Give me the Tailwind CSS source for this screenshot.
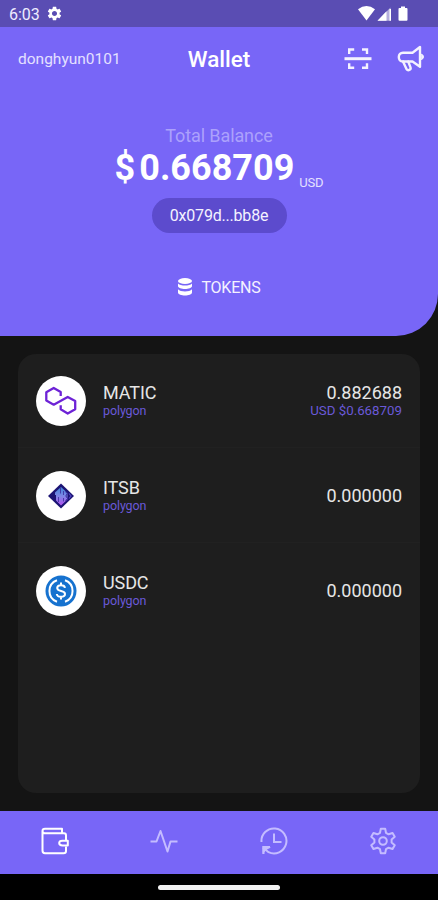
<!DOCTYPE html>
<html lang="en">
<head>
  <meta charset="UTF-8" />
  <meta name="viewport" content="width=device-width, initial-scale=1.0" />
  <title>Wallet</title>
  <script src="https://cdn.jsdelivr.net/npm/@tailwindcss/browser@4"></script>
</head>
<body class="h-[900px] w-[438px] overflow-hidden flex flex-col bg-[#141414] text-white font-[Roboto,sans-serif] whitespace-nowrap">
  <!-- Status bar -->
  <div class="h-[27px] shrink-0 bg-[#5a4db3] flex items-center pl-[9px] pr-[30px]">
    <span class="text-[16px] leading-none text-[#eeecff] pt-[2px] w-[37px]">6:03</span>
    <svg class="w-[17px] h-[17px]" viewBox="0 0 24 24" fill="#fff"><path d="M19.14 12.94c.04-.3.06-.61.06-.94 0-.32-.02-.64-.07-.94l2.03-1.58c.18-.14.23-.41.12-.61l-1.92-3.32c-.12-.22-.37-.29-.59-.22l-2.39.96c-.5-.38-1.03-.7-1.62-.94l-.36-2.54c-.04-.24-.24-.41-.48-.41h-3.84c-.24 0-.43.17-.47.41l-.36 2.54c-.59.24-1.13.57-1.62.94l-2.39-.96c-.22-.08-.47 0-.59.22L2.74 8.87c-.12.21-.08.47.12.61l2.03 1.58c-.05.3-.09.63-.09.94s.02.64.07.94l-2.03 1.58c-.18.14-.23.41-.12.61l1.92 3.32c.12.22.37.29.59.22l2.39-.96c.5.38 1.03.7 1.62.94l.36 2.54c.05.24.24.41.48.41h3.84c.24 0 .44-.17.47-.41l.36-2.54c.59-.24 1.13-.56 1.62-.94l2.39.96c.22.08.47 0 .59-.22l1.92-3.32c.12-.22.07-.47-.12-.61l-2.01-1.58zM12 15.6c-1.98 0-3.6-1.62-3.6-3.6s1.62-3.6 3.6-3.6 3.6 1.62 3.6 3.6-1.62 3.6-3.6 3.6z" /></svg>
    <svg class="ml-auto w-[50px] h-[17px]" viewBox="0 0 50 17" fill="#fff">
      <path d="M0 4.200Q8.500-2 17 4.200L8.500 15.500Z" />
      <path d="M19.500 15.700L32.500 2.500V15.700Z" fill-opacity=".55" />
      <path d="M19.500 15.700L28.500 6.300V15.700Z" />
      <path d="M31.500 4h1.500v11.700H31.500Z" />
      <path d="M43 1.500h4V3h1.600q.900 0 .900.900v10.900q0 .900-.900.900h-7.200q-.900 0-.900-.900V3.900q0-.900.900-.900H43Z" />
    </svg>
  </div>

  <!-- Balance -->
  <header class="h-[309px] shrink-0 bg-[#7866f7] rounded-br-[42px] flex flex-col">
    <div class="h-[65px] grid grid-cols-3 items-center pl-[18px] pr-[13px]">
      <span class="text-[15.500px] text-[#e4e0ff]">donghyun0101</span>
      <h1 class="text-[22.500px] font-medium text-center pr-[5px]">Wallet</h1>
      <div class="flex justify-end gap-[25px] pb-[1px]">
        <svg class="w-[28px] h-[28px]" viewBox="0 0 28 28" fill="none" stroke="#f4f2ff" stroke-width="2.400">
          <path d="M.500 13.700h27" stroke-width="3" />
          <path d="M5.200 9V4.500h5M18 4.500h5V9M5.200 18.300v4.500h5M18 22.800h5v-4.500" />
        </svg>
        <svg class="w-[28px] h-[28px]" viewBox="0 0 28 28" fill="none" stroke="#f4f2ff" stroke-width="2.400" stroke-linejoin="round" stroke-linecap="round">
          <path d="M23 2v19.700l-7.500-5.200H6C3 16.500 1.800 14.500 1.800 12S3.500 7.700 6 7.700h9.500Z" />
          <path d="M6 16.500l3.600 7.700c1.500 2 4.700.500 3.900-1.800L11.200 16.500" />
          <path d="M24.200 9.200c3.200.300 3.200 5 0 5.300Z" fill="#f4f2ff" stroke-width="1" />
        </svg>
      </div>
    </div>
    <div class="flex flex-col items-center">
      <p class="mt-[32px] h-[24px] text-[18px] leading-[24px] tracking-[-.1px] text-[#aca1fc]">Total Balance</p>
      <div class="h-[40px] flex items-center">
        <span class="text-[36px] leading-none font-bold">$</span>
        <span class="ml-[4px] text-[36px] leading-none font-bold">0.668709</span>
        <span class="ml-[5px] mt-[28px] text-[13px] leading-none text-[#e4e0ff] tracking-[-.2px]">USD</span>
      </div>
      <div class="mt-[10px] h-[35px] w-[135px] rounded-full bg-[#5c4bcd] flex items-center justify-center text-[16px] tracking-[-.2px] text-[#f4f2ff]">0x079d...bb8e</div>
      <div class="mt-[42px] h-[24px] flex items-center">
        <svg class="w-[16px] h-[20px]" viewBox="0 0 16 20" fill="#fff">
          <ellipse cx="8" cy="4" rx="7" ry="3" />
          <path d="M1 6.500c2.500 2.800 11.500 2.800 14 0v2.500c0 4-14 4-14 0Z" />
          <path d="M1 12.300c2.500 2.900 11.500 2.900 14 0V15.500c0 4-14 4-14 0Z" />
        </svg>
        <span class="ml-[8px] pt-[2px] text-[16px] tracking-[-.2px] text-[#f4f2ff]">TOKENS</span>
      </div>
    </div>
  </header>

  <!-- Token list -->
  <main class="mt-[18px] mx-[18px] h-[439px] shrink-0 rounded-[18px] bg-[#1e1e1e]">
    <div class="h-[94px] border-b border-[#212121] flex items-center px-[18px]">
      <svg class="w-[50px] h-[50px]" viewBox="0 0 50 50" fill="none">
        <circle cx="25" cy="25" r="25" fill="#fff" />
        <path d="M24.700 20V16L17.700 11.900L10.300 16.200V24.600L17.700 28.700L31.700 20.900L39.200 25.100V33.300L31.700 37.500L24.700 33.300V29.200" stroke="#6d22d6" stroke-width="2.300" stroke-linejoin="round" />
      </svg>
      <div class="ml-[17px]">
        <p class="text-[18px] leading-[20px] tracking-[-.1px] text-[#e6e6e6]">MATIC</p>
        <p class="text-[12.500px] leading-[15px] tracking-[-.1px] text-[#6a59d8]">polygon</p>
      </div>
      <div class="ml-auto text-right">
        <p class="text-[18px] leading-[20px] text-[#e6e6e6]">0.882688</p>
        <p class="text-[13.300px] leading-[15px] text-[#6a59d8]">USD $0.668709</p>
      </div>
    </div>
    <div class="h-[95px] border-b border-[#212121] flex items-center px-[18px] pt-px">
      <svg class="w-[50px] h-[50px]" viewBox="0 0 50 50">
        <defs>
          <linearGradient id="itsb" x1="0" y1="0" x2="0" y2="1">
            <stop offset="0" stop-color="#3f86d8" />
            <stop offset=".5" stop-color="#7f86e6" />
            <stop offset="1" stop-color="#b050ee" />
          </linearGradient>
        </defs>
        <circle cx="25" cy="25" r="25" fill="#fff" />
        <path d="M25 12.500L38 25L25 37.500L12 25Z" fill="#1c1474" />
        <path d="M19 21.500L25 16L31.500 22V28.500L25 34.500L20 29.500V24H19Z" fill="url(#itsb)" />
        <path d="M24.500 16.500v6M22.500 26v5M27.500 20v4M27.500 27v3.500" stroke="#3a2c9c" stroke-width=".8" />
        <path d="M29.500 20.500l1.800 2.200-1.500 2.300 1.800 2.500-2 2.500" stroke="#32209a" stroke-width="1" fill="none" />
        <path d="M33 22.500l2 2.500-2 2.500" stroke="#5348c8" stroke-width="1.200" fill="none" />
      </svg>
      <div class="ml-[17px]">
        <p class="text-[18px] leading-[20px] tracking-[-.1px] text-[#e6e6e6]">ITSB</p>
        <p class="text-[12.500px] leading-[15px] tracking-[-.1px] text-[#6a59d8]">polygon</p>
      </div>
      <p class="ml-auto text-[18px] leading-[20px] text-[#e6e6e6]">0.000000</p>
    </div>
    <div class="h-[95px] flex items-center px-[18px]">
      <svg class="w-[50px] h-[50px]" viewBox="0 0 50 50" fill="none" stroke="#fff" stroke-width="2">
        <circle cx="25" cy="25" r="25" fill="#fff" stroke="none" />
        <circle cx="25" cy="25" r="15.500" fill="#1672cf" stroke="none" />
        <path d="M21 14.200a11.500 11.500 0 0 0 0 21.600M29 14.200a11.500 11.500 0 0 1 0 21.600" />
        <path d="M29 21.800c-.3-2-2-2.600-4-2.600s-3.800.8-3.800 2.800c0 4.300 7.800 1.700 7.800 6 0 2-1.800 2.800-4 2.800s-4-.8-4.200-2.800M25 16.500v3M25 30.500v3" />
      </svg>
      <div class="ml-[17px]">
        <p class="text-[18px] leading-[20px] tracking-[-.1px] text-[#e6e6e6]">USDC</p>
        <p class="text-[12.500px] leading-[15px] tracking-[-.1px] text-[#6a59d8]">polygon</p>
      </div>
      <p class="ml-auto text-[18px] leading-[20px] text-[#e6e6e6]">0.000000</p>
    </div>
  </main>

  <!-- Tab bar -->
  <nav class="mt-[18px] h-[63px] shrink-0 bg-[#7866f7] grid grid-cols-4 place-items-center pb-[3px]">
    <svg class="w-[28px] h-[28px]" viewBox="0 0 28 28" fill="none" stroke="#fff" stroke-width="2" stroke-linejoin="round">
      <path d="M21 6V1.800H4Q1.500 1.800 1.500 4v19.500Q1.500 26.300 4 26.300H22.500Q25 26.300 25 24V19.500M25 13V8.500Q25 6.300 23 6.300H4Q1.500 6.300 1.500 4" />
      <path d="M21.500 13.700h5.300v4.800h-5.300q-3.300 0-3.300-2.400t3.300-2.400Z" />
    </svg>
    <svg class="w-[28px] h-[28px]" viewBox="0 0 28 28" fill="none" stroke="#c4bcff" stroke-width="2" stroke-linejoin="round">
      <path d="M.500 14.500H6.500L10.500 4L17.500 24.500L20.500 14.500H27.500" />
    </svg>
    <svg class="w-[28px] h-[28px]" viewBox="0 0 28 28" fill="none" stroke="#c4bcff" stroke-width="2">
      <path d="M1.500 15A12.500 12.500 0 1 1 8.500 25.200L3 20.500M14 6.500v8.500h7.500" />
      <path d="M2.500 27V19l8.500 1.500L7 22.500Z" fill="#c4bcff" stroke="none" />
      <path d="M3.500 27V20h6.500" />
    </svg>
    <svg class="w-[28px] h-[28px]" viewBox="-14 -14 28 28" fill="none" stroke="#c4bcff" stroke-width="2" stroke-linejoin="round">
      <path d="M-3-8.200L-2.200-12.300H2.200L3-8.200L5.600-6.700L9.550-8.050L11.750-4.250L8.600-1.500V1.500L11.750 4.250L9.550 8.050L5.600 6.700L3 8.200L2.200 12.300H-2.200L-3 8.200L-5.600 6.700L-9.550 8.050L-11.750 4.250L-8.600 1.500V-1.500L-11.750-4.250L-9.550-8.050L-5.600-6.700Z" />
      <circle r="3.800" />
    </svg>
  </nav>

  <!-- Gesture bar -->
  <div class="flex-1 bg-black flex justify-center">
    <div class="mt-[11px] h-[5px] w-[122px] rounded-full bg-[#f2f2f2]"></div>
  </div>
</body>
</html>
